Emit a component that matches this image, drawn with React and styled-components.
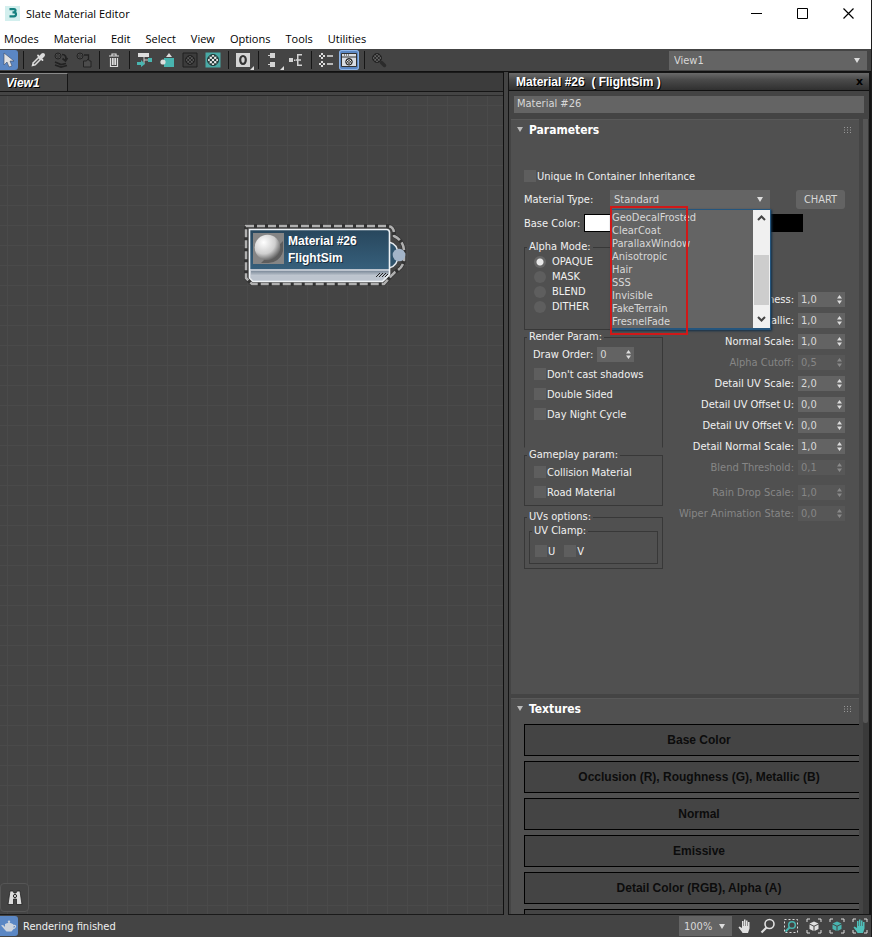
import React, { useId } from 'react'
import styled, { createGlobalStyle, css } from 'styled-components'

const GlobalStyle = createGlobalStyle`
  * {
    box-sizing: border-box;
  }

  body {
    margin: 0;
    background: #444;
  }

  button,
  input,
  select {
    font: inherit;
    color: inherit;
    margin: 0;
    padding: 0;
    border: 0;
    border-radius: 0;
    outline: 0;
  }
`

const uiFont = css`
  font-family: 'DejaVu Sans Condensed', 'DejaVu Sans', sans-serif;
  font-size: 11px;
`

const Window = styled.div`
  ${uiFont}
  display: flex;
  flex-direction: column;
  height: 100vh;
  overflow: hidden;
  color: #f0f0f0;
  background: #444;
  border-right: 1px solid #1c1c1c;
`

const TitleBar = styled.header`
  display: flex;
  align-items: center;
  height: 27px;
  padding-left: 5px;
  color: #000;
  background: #fff;
  font-family: 'Open Sans', sans-serif;

  h1 {
    flex: 1;
    margin: 0 0 0 6px;
    font-size: 11px;
    font-weight: 400;
  }
`

const WindowButton = styled.button`
  display: flex;
  align-items: center;
  justify-content: center;
  width: 46px;
  height: 27px;
  background: none;
`

const MenuBar = styled.nav`
  display: flex;
  gap: 15px;
  height: 22px;
  padding: 0 4px;
  background: #fff;
  color: #000;
  font-family: 'Open Sans', sans-serif;

  button {
    background: none;
    line-height: 24px;
  }
`

const Toolbar = styled.div`
  display: flex;
  align-items: center;
  gap: 3px;
  height: 23px;
  padding-right: 4px;
  border-bottom: 1px solid #111;
`

const Tool = styled.button`
  position: relative;
  display: flex;
  align-items: center;
  justify-content: center;
  flex: none;
  width: ${(p) => (p.$edge ? 18 : 20)}px;
  height: 20px;
  background: ${(p) => (p.$active ? '#5b87c4' : 'none')};
  border-radius: ${(p) => (p.$edge ? '0 3px 3px 0' : '3px')};
  ${(p) => p.$ring && 'box-shadow: inset 0 0 0 1px #8db4e8;'}
`

const Separator = styled.span`
  align-self: stretch;
  width: 4px;
  margin: 2px 0;
  background: linear-gradient(#161616, #161616) center / 1px 100% no-repeat;
`

const Spacer = styled.span`
  flex: 1;
`

const SelectBox = styled.div`
  position: relative;
  flex: none;
  width: ${(p) => p.$width}px;
  height: ${(p) => p.$height}px;
  background: #646464;
  color: #d8d8d8;

  select {
    width: 100%;
    height: 100%;
    padding-left: ${(p) => p.$indent}px;
    background: none;
    appearance: none;
  }

  &::after {
    content: '';
    position: absolute;
    top: 50%;
    right: 7px;
    margin-top: -2px;
    border: 3px solid transparent;
    border-top: 5px solid #ddd;
    border-bottom: 0;
    pointer-events: none;
  }
`

const Workspace = styled.main`
  flex: 1;
  display: flex;
  gap: 4px;
  min-height: 0;
`

const GraphPane = styled.section`
  flex: 1;
  display: flex;
  flex-direction: column;
  min-width: 0;
  border-right: 1px solid #111;
`

const TabStrip = styled.div`
  height: 20px;
  margin-bottom: 3px;
  background: #3c3c3c;
  border-top: 1px solid #1a1a1a;
  border-bottom: 1px solid #151515;
`

const Tab = styled.button`
  width: 68px;
  height: 18px;
  padding-left: 6px;
  text-align: left;
  color: #fff;
  background: #444;
  border-top: 1px solid #8a8a8a;
  border-right: 1px solid #151515;
  font: italic bold 12px/16px 'Liberation Sans', sans-serif;
  text-shadow: 1px 1px 0 #000;
`

const Canvas = styled.div`
  position: relative;
  flex: 1;
  border-top: 1px solid #2a2a2a;
  border-bottom: 1px solid #1a1a1a;
  background-color: #444;
  background-image: linear-gradient(90deg, #4a4a4a 1px, transparent 1px),
    linear-gradient(#4a4a4a 1px, transparent 1px);
  background-size: 20px 20px;
  background-position: 7px 9px;
`

const NodeBox = styled.div`
  position: absolute;
  left: 240px;
  top: 124px;
  width: 170px;
  height: 66px;

  > svg {
    position: absolute;
    inset: 0;
  }
`

const NodeContent = styled.div`
  position: relative;
  display: flex;
  gap: 4px;
  padding: 13px 0 0 13px;
  font: bold 12px/17px 'Liberation Sans', sans-serif;
  color: #fff;
  text-shadow: 1px 1px 0 #1a2c3a;

  p {
    margin: 0;
  }
`

const FindButton = styled.button`
  position: absolute;
  left: 0;
  bottom: 2px;
  display: flex;
  align-items: center;
  justify-content: center;
  width: 29px;
  height: 29px;
  background: #444;
  border: 1px solid #555;
  border-radius: 4px;
`

const EditorPane = styled.aside`
  display: flex;
  flex-direction: column;
  flex: none;
  width: 363px;
  border: solid #151515;
  border-width: 1px 2px 1px 1px;
  overflow: hidden;
`

const PaneTitle = styled.div`
  display: flex;
  align-items: center;
  justify-content: space-between;
  flex: none;
  height: 18px;
  padding: 0 6px 0 7px;
  background: linear-gradient(#6a6a6a, #4a4a4a 40%, #303030);
  border-bottom: 1px solid #111;

  h2 {
    margin: 0;
    white-space: pre;
    font: bold 12px/16px 'Liberation Sans', sans-serif;
    text-shadow: 1px 1px 0 #000;
    color: #fff;
  }

  button {
    background: none;
    color: #000;
    font: bold 11px/14px 'DejaVu Sans', sans-serif;
  }
`

const NameInput = styled.input`
  flex: none;
  height: 17px;
  margin: 5px 5px 6px;
  padding: 0 3px 2px;
  color: #d8d8d8;
  background: #646464;
`

const PaneBody = styled.div`
  flex: 1;
  display: flex;
  gap: 4px;
  min-height: 0;
  padding-left: 2px;
`

const Rollouts = styled.div`
  flex: 1;
  display: flex;
  flex-direction: column;
  gap: 4px;
  min-width: 0;
  overflow: hidden;
`

const Scrollbar = styled.div`
  width: 6px;
  background: #3a3a3a;

  &::before {
    content: '';
    display: block;
    width: 5px;
    height: 76%;
    background: #565656;
    border-radius: 0 0 2px 2px;
  }
`

const Rollout = styled.section`
  flex: none;
  background: #505050;
  border-top: 1px solid #595959;
`

const RolloutTitle = styled.div`
  display: flex;
  align-items: center;
  gap: 6px;
  height: 20px;
  padding: 0 7px 1px 6px;

  h3 {
    flex: 1;
    margin: 0;
    color: #fff;
    font: bold 12px/20px 'DejaVu Sans Condensed', 'DejaVu Sans', sans-serif;
  }
`

const ParamsBody = styled.div`
  display: flex;
  flex-direction: column;
  gap: 4px;
  min-height: 554px;
  padding: 27px 14px 0 13px;
`

const Row = styled.div`
  display: flex;
  align-items: center;
  gap: ${(p) => p.$gap || 0}px;
  height: ${(p) => p.$height || 20}px;
  padding-left: ${(p) => p.$indent || 0}px;
`

const FieldLabel = styled.label`
  width: ${(p) => (p.$width ? `${p.$width}px` : 'auto')};
  white-space: nowrap;
`

const CheckLabel = styled.label`
  display: flex;
  align-items: center;
  gap: ${(p) => p.$gap || 1}px;
  white-space: nowrap;

  input {
    flex: none;
    width: 12px;
    height: 12px;
    appearance: none;
    background: #5e5e5e;
  }

  input[type='radio'] {
    border-radius: 50%;
  }

  input[type='radio']:checked {
    background: radial-gradient(circle, #e8e8e8 0 3px, #666 4px);
  }
`

const ChartButton = styled.button`
  width: 49px;
  height: 19px;
  margin-left: auto;
  color: #d8d8d8;
  background: #636363;
  border-radius: 3px;
`

const Swatch = styled.button`
  width: ${(p) => p.$width}px;
  height: 18px;
  background: ${(p) => p.$color};
  border: 1px solid #000;
`

const DropList = styled.div`
  position: absolute;
  z-index: 2;
  top: 19px;
  left: 0;
  display: flex;
  width: 161px;
  height: 121px;
  background: #646464;
  border: solid #24557d;
  border-width: 1px 1px 2px 0;
  box-shadow: 1px 1px 2px #12304a;

  ul {
    flex: 1;
    margin: 0;
    padding: 1px 0 0 2px;
    list-style: none;
    line-height: 13px;
    white-space: nowrap;
  }
`

const ListScroll = styled.div`
  display: flex;
  flex-direction: column;
  align-items: center;
  width: 17px;
  background: #f0f0f0;

  button {
    display: flex;
    align-items: center;
    justify-content: center;
    width: 17px;
    height: 17px;
    background: none;
  }

  span {
    width: 15px;
    height: 50px;
    margin: 28px 0 6px;
    background: #cdcdcd;
  }
`

const RedMark = styled.div`
  position: absolute;
  z-index: 3;
  top: 16px;
  left: 0;
  width: 78px;
  height: 129px;
  border: 2px solid #d01818;
  pointer-events: none;
`

const Columns = styled.div`
  display: flex;
  align-items: flex-start;
  justify-content: space-between;
  padding-top: 3px;
`

const Groups = styled.div`
  width: 139px;
`

const Group = styled.fieldset`
  min-width: 0;
  min-height: ${(p) => p.$height || 0}px;
  margin: 0 ${(p) => p.$inset || 0}px ${(p) => p.$space || 0}px;
  padding: ${(p) => p.$top || 0}px 0 ${(p) => p.$pad || 0}px;
  border: 1px solid #383838;
  ${(p) => p.$open && 'border-bottom-color: transparent;'}

  legend {
    margin-left: 2px;
    padding: 0 2px;
    line-height: 14px;
  }
`

const Values = styled.div`
  padding-top: 49px;
`

const ValueRow = styled.div`
  display: flex;
  align-items: center;
  justify-content: flex-end;
  gap: 4px;
  height: 21px;
  margin-top: ${(p) => (p.$apart ? 4 : 0)}px;
  color: ${(p) => (p.$disabled ? '#868686' : '#f0f0f0')};
  white-space: nowrap;
`

const SpinnerBox = styled.span`
  display: flex;
  align-items: center;
  width: ${(p) => p.$width}px;
  height: 15px;
  padding-right: 3px;
  background: ${(p) => (p.$disabled ? '#575757' : '#636363')};
  color: ${(p) => (p.$disabled ? '#868686' : '#d8d8d8')};

  input {
    flex: 1;
    min-width: 0;
    padding-left: 3px;
    background: none;
  }
`

const TextureList = styled.div`
  display: flex;
  flex-direction: column;
  gap: 5px;
  padding: 5px 0 0 13px;
`

const TextureButton = styled.button`
  width: calc(100% + 15px);
  height: 32px;
  color: #0c0c0c;
  background: #444;
  border: 1px solid #000;
  font: bold 12px 'Liberation Sans', sans-serif;
`

const StatusBar = styled.footer`
  display: flex;
  align-items: center;
  flex: none;
  gap: 3px;
  height: 22px;
  padding-right: 1px;
`

const StatusText = styled.span`
  flex: 1;
  padding-left: 2px;
`

const Svg = ({ size = 16, children }) => (
  <svg width={size} height={size} viewBox={`0 0 ${size} ${size}`} fill="none" aria-hidden="true">
    {children}
  </svg>
)

// round checkered material swatch, two contrasting tones
const Checker = ({ x, y, r = 5, light = '#ddd', dark = '#333' }) => {
  const clip = useId()
  const u = (r * 2) / 5
  return (
    <g>
      <clipPath id={clip}>
        <circle cx={x} cy={y} r={r} />
      </clipPath>
      <g clipPath={`url(#${clip})`}>
        <circle cx={x} cy={y} r={r} fill={dark} />
        {[0, 1, 2, 3, 4].map((row) =>
          [0, 1, 2, 3, 4].map((col) =>
            (row + col) % 2 === 0 ? (
              <rect
                key={`${row}${col}`}
                x={x - r + col * u}
                y={y - r + row * u}
                width={u}
                height={u}
                fill={light}
              />
            ) : null
          )
        )}
      </g>
      <circle cx={x} cy={y} r={r} stroke={dark} />
    </g>
  )
}

const MiniChecker = ({ y }) => (
  <path
    d={`M3 ${y}h2v2h-2zM1 ${y + 2}h2v2h-2zM5 ${y + 2}h2v2h-2zM3 ${y + 4}h2v2h-2z`}
    fill="#ddd"
  />
)

const icons = {
  pointer: <path d="M3 1v12l3-3 2 5 3-1-2-5h4z" fill="#e2e2e2" stroke="#3c4c66" strokeWidth=".6" />,
  picker: (
    <>
      <path d="M1.500 14.500l1-4L8.500 4.500l3 3-6 6z" fill="#ddd" />
      <path d="M4 12l5-5" stroke="#555" strokeWidth="1.2" />
      <path d="M8 3.500L12.500 8" stroke="#ddd" strokeWidth="1.800" strokeLinecap="round" />
      <path d="M11.500 4.500l1.500-1.500" stroke="#ddd" strokeWidth="4" strokeLinecap="round" />
    </>
  ),
  put: (
    <>
      <Checker x={5} y={4} r={3} light="#666" dark="#222" />
      <path
        d="M2 10l6 2.500 5-1M2 13l6 2 6-1.500M9 2.500c4 0 4.500 3 3.500 6M9.500 6.500l3 2.500 2-3"
        stroke="#222"
        strokeWidth="1.700"
      />
    </>
  ),
  assign: (
    <>
      <Checker x={4} y={4} r={3} light="#666" dark="#222" />
      <path d="M8 3h4.500v5" stroke="#222" strokeWidth="1.300" />
      <path d="M7.500 9h3l1.500-2 1.500 2h1.500v6H7.500z" fill="#4c4c4c" stroke="#222" />
    </>
  ),
  trash: (
    <path
      d="M3 4h10M6 4V2h4v2M4.500 6v8.500h7V6M6.500 6v7M8 6v7M9.500 6v7"
      stroke="#ddd"
      strokeWidth="1.200"
    />
  ),
  move: (
    <>
      <path d="M2 1h11v4H2z" fill="#ddd" />
      <path d="M8 5v3h4M8 8v4" stroke="#ccc" />
      <path d="M12 6h4v4h-4zM1 10h4V8l4 4-4 3v-2H1z" fill="#49b5b0" />
    </>
  ),
  hide: (
    <>
      <path d="M5 6h10v9H5z" fill="#49b5b0" />
      <path d="M7 5l3-4 3 4z" fill="#ddd" />
      <circle cx="4" cy="10" r="2.600" fill="#ddd" />
    </>
  ),
  background: (
    <>
      <path d="M1 1h14v14H1z" stroke="#1e1e1e" fill="#3c3c3c" />
      <Checker x={8} y={8} r={4.5} light="#5c5c5c" dark="#222" />
    </>
  ),
  shaded: (
    <>
      <path d="M.5.5h15v15H.5z" fill="#49aaa6" />
      <Checker x={8} y={8} r={5.5} light="#eee" dark="#1f3534" />
    </>
  ),
  channel: (
    <>
      <path d="M1 1h14v14H1z" fill="#d4d4d4" />
      <ellipse cx="8" cy="8" rx="2.800" ry="4" stroke="#333" strokeWidth="2.200" />
    </>
  ),
  layoutAll: <path d="M5 1h5v5H5zM5 10h5v5H5zM3 3h2v1H3zM3 12h2v1H3z" fill="#d4d4d4" />,
  layoutKids: (
    <path
      d="M1 6h4v4H1zM6 7.500h1.500v1.500H6zM9 2h5v1.500h-3.500v3.800H13v1.500h-2.500v3.800H14V14H9V8.800H8V7.300h1z"
      fill="#d4d4d4"
    />
  ),
  navigator: (
    <>
      <MiniChecker y={1} />
      <MiniChecker y={9} />
      <path d="M9 4h6M9 12h6" stroke="#ddd" strokeWidth="1.600" />
    </>
  ),
  paramEditor: (
    <>
      <path d="M.5 1.500h15v13H.5z" fill="#d9dde4" stroke="#333" />
      <path d="M1 5h14M3 3h1M5 3h1M7 3h1" stroke="#333" />
      <Checker x={8} y={9.800} r={3.300} light="#eee" dark="#222" />
    </>
  ),
  search: (
    <>
      <Checker x={6} y={6} r={4.5} light="#666" dark="#222" />
      <path d="M10.500 10.500l3 3" stroke="#2b2b2b" strokeWidth="3.500" strokeLinecap="round" />
    </>
  ),
  find: (
    <>
      <path
        d="M3 1h3l1 2h2l1-2h3l2 13.500H9.500V9h-3v5.500H1z"
        fill="#ddd"
        stroke="#222"
        strokeWidth=".8"
      />
      <circle cx="8" cy="6" r="1.600" fill="#ddd" stroke="#222" />
    </>
  ),
  teapot: (
    <>
      <path d="M4 6c2-1.500 6-1.500 8 0 1.500 3 .5 6-1.500 7.500h-5C4 12.500 2 9 0 7.500L2 7l2 2z" fill="#cdd3dc" />
      <path d="M12 7.500c4-1 3 3-.5 3.500" stroke="#cdd3dc" strokeWidth="1.200" />
      <circle cx="8" cy="3.800" r="1.200" fill="#cdd3dc" />
    </>
  ),
}

const handPath =
  'M5 14L1.500 9.500l1-1L5 10V3h1.500v5H7V1.500h1.500V8H9V2.500h1.500V8h.5V4h1.500v6.500L11 15H5.500z'
const corners = 'M1 4V1h3M12 1h3v3M15 12v3h-3M4 15H1v-3'

const Cube = ({ fill }) => (
  <>
    <path
      d="M8 3.500l4.500 2L8 7.700 3.500 5.500zM3.500 6.600l4 2v4.400l-4-2zM12.500 6.600l-4 2v4.400l4-2z"
      fill={fill}
    />
    <path d={corners} stroke="#ddd" />
  </>
)

const statusTools = [
  ['Pan', <path d={handPath} fill="#e0e0e0" />],
  [
    'Zoom',
    <>
      <circle cx="9.500" cy="6" r="4.500" stroke="#e0e0e0" strokeWidth="1.600" />
      <path d="M6.500 9.500l-5 5" stroke="#e0e0e0" strokeWidth="2.200" />
    </>,
  ],
  [
    'Zoom Region',
    <>
      <path d="M1.500 1.500h13v13h-13z" stroke="#ddd" strokeDasharray="2 2" />
      <circle cx="9" cy="7" r="3.300" stroke="#49b5b0" strokeWidth="1.500" />
      <path d="M6.500 9.500l-4 4" stroke="#49b5b0" strokeWidth="2" />
    </>,
  ],
  ['Zoom Extents', <Cube fill="#e0e0e0" />],
  ['Zoom Extents Selected', <Cube fill="#49b5b0" />],
  [
    'Pan to Selected',
    <>
      <path d={corners} stroke="#ddd" />
      <path d={handPath} fill="#4fc0ba" />
    </>,
  ],
]

// null is a separator
const toolbar = [
  { icon: 'pointer', label: 'Select Tool', active: true, edge: true },
  null,
  { icon: 'picker', label: 'Pick Material from Object' },
  { icon: 'put', label: 'Put Material to Scene' },
  { icon: 'assign', label: 'Assign Material to Selection' },
  null,
  { icon: 'trash', label: 'Delete Selected' },
  null,
  { icon: 'move', label: 'Move Children' },
  { icon: 'hide', label: 'Hide Unused Nodeslots' },
  { icon: 'background', label: 'Show Background in Preview' },
  { icon: 'shaded', label: 'Show Shaded Material in Viewport' },
  null,
  { icon: 'channel', label: 'Material ID Channel', flyout: true },
  null,
  { icon: 'layoutAll', label: 'Lay Out All', flyout: true },
  { icon: 'layoutKids', label: 'Lay Out Children' },
  null,
  { icon: 'navigator', label: 'Material/Map Browser' },
  { icon: 'paramEditor', label: 'Parameter Editor', active: true, ring: true },
  null,
  { icon: 'search', label: 'Select by Material' },
]

const menus = ['Modes', 'Material', 'Edit', 'Select', 'View', 'Options', 'Tools', 'Utilities']

const materialTypes = [
  'GeoDecalFrosted',
  'ClearCoat',
  'ParallaxWindow',
  'Anisotropic',
  'Hair',
  'SSS',
  'Invisible',
  'FakeTerrain',
  'FresnelFade',
]

const values = [
  { label: 'Roughness:', value: '1,0' },
  { label: 'Metallic:', value: '1,0' },
  { label: 'Normal Scale:', value: '1,0' },
  { label: 'Alpha Cutoff:', value: '0,5', disabled: true },
  { label: 'Detail UV Scale:', value: '2,0' },
  { label: 'Detail UV Offset U:', value: '0,0' },
  { label: 'Detail UV Offset V:', value: '0,0' },
  { label: 'Detail Normal Scale:', value: '1,0' },
  { label: 'Blend Threshold:', value: '0,1', disabled: true },
  { label: 'Rain Drop Scale:', value: '1,0', disabled: true, apart: true },
  { label: 'Wiper Animation State:', value: '0,0', disabled: true },
]

const textures = [
  'Base Color',
  'Occlusion (R), Roughness (G), Metallic (B)',
  'Normal',
  'Emissive',
  'Detail Color (RGB), Alpha (A)',
  '',
]

const Flyout = styled.span`
  position: absolute;
  right: -1px;
  bottom: 0;
  border: 2px solid transparent;
  border-right-color: #ddd;
  border-bottom-color: #ddd;
`

const Check = ({ children }) => (
  <CheckLabel>
    <input type="checkbox" />
    {children}
  </CheckLabel>
)

const Spinner = ({ id, value, disabled, width = 47 }) => (
  <SpinnerBox $width={width} $disabled={disabled}>
    <input id={id} type="text" defaultValue={value} disabled={disabled} />
    <svg width="5" height="9" viewBox="0 0 5 9" fill={disabled ? '#8a8a8a' : '#ddd'}>
      <path d="M0 3.500L2.500 0 5 3.500zM0 5.500L2.500 9 5 5.500z" />
    </svg>
  </SpinnerBox>
)

const RolloutHead = ({ title }) => (
  <RolloutTitle>
    <svg width="6" height="5" viewBox="0 0 6 5">
      <path d="M0 0h6L3 5z" fill="#bbb" />
    </svg>
    <h3>{title}</h3>
    <svg width="8" height="6" viewBox="0 0 8 6">
      <path d="M0 .5h7M0 3h7M0 5.500h7" stroke="#999" strokeDasharray="1 2" />
    </svg>
  </RolloutTitle>
)

const nodeOutline =
  'M6 6H147Q153 6 154 12V16Q163 20 164 30V40Q163 48 155 52L152 55 144 64H12L6 58Z'

const MaterialNode = () => (
  <NodeBox>
    <svg width="170" height="66" viewBox="0 0 170 66" fill="none">
      <defs>
        <linearGradient id="nodeBlue" x1="0" y1="0" x2="0" y2="1">
          <stop offset="0" stopColor="#28475d" />
          <stop offset="1" stopColor="#365f7b" />
        </linearGradient>
        <linearGradient id="nodeFoot" x1="0" y1="0" x2="0" y2="1">
          <stop offset="0" stopColor="#7e8c9b" />
          <stop offset="1" stopColor="#c5ccd5" />
        </linearGradient>
      </defs>
      <path d={nodeOutline} stroke="#333" strokeWidth="4" />
      <path d={nodeOutline} stroke="#b0b0b0" strokeWidth="2.500" strokeDasharray="8 3" />
      <path d="M149 22q9 2 9 13t-9 13" fill="#2f536c" stroke="#e4e9ee" strokeWidth="1.500" />
      <path d="M10 10h140v39H10z" fill="url(#nodeBlue)" />
      <path d="M10 49h140v6l-6 6H13l-3-3z" fill="#bcc4ce" />
      <path d="M11 51h138v5H11z" fill="url(#nodeFoot)" />
      <path
        d="M9.500 9.500h137q3 0 3 3v42l-7 7H13l-3.500-3.500z"
        stroke="#eef2f5"
        strokeWidth="1.600"
      />
      <path d="M136 57l4-4M139 57l4-4M142 57l4-4M145 57l3-3" stroke="#222" />
      <circle cx="159" cy="35" r="6.300" fill="#a3b4c8" />
    </svg>
    <NodeContent>
      <svg width="31" height="31" viewBox="0 0 31 31">
        <defs>
          <radialGradient id="ball" cx=".35" cy=".3" r=".75">
            <stop offset="0" stopColor="#fff" />
            <stop offset=".6" stopColor="#cfcfcf" />
            <stop offset="1" stopColor="#5a5a5a" />
          </radialGradient>
        </defs>
        <path d="M0 0h31v31H0z" fill="#858585" />
        <path d="M14 30a15 15 0 0016-12V8L8 30z" fill="#5d5d5d" />
        <circle cx="14.500" cy="14.500" r="12.800" fill="url(#ball)" />
      </svg>
      <div>
        <p>Material #26</p>
        <p>FlightSim</p>
      </div>
    </NodeContent>
  </NodeBox>
)

const Parameters = () => (
  <Rollout>
    <RolloutHead title="Parameters" />
    <ParamsBody>
      <Row $height={18}>
        <Check>Unique In Container Inheritance</Check>
      </Row>
      <Row>
        <FieldLabel htmlFor="type" $width={86}>
          Material Type:
        </FieldLabel>
        <SelectBox $width={160} $height={19} $indent={4}>
          <select id="type" defaultValue="Standard">
            <option>Standard</option>
          </select>
          <DropList>
            <ul role="listbox" aria-label="Material types">
              {materialTypes.map((type) => (
                <li key={type} role="option" aria-selected="false">
                  {type}
                </li>
              ))}
            </ul>
            <ListScroll>
              <button aria-label="Scroll up">
                <svg width="9" height="6" viewBox="0 0 9 6" fill="none">
                  <path d="M1 5l3.500-3.500L8 5" stroke="#444" strokeWidth="2" />
                </svg>
              </button>
              <span />
              <button aria-label="Scroll down">
                <svg width="9" height="6" viewBox="0 0 9 6" fill="none">
                  <path d="M1 1l3.500 3.500L8 1" stroke="#444" strokeWidth="2" />
                </svg>
              </button>
            </ListScroll>
          </DropList>
          <RedMark />
        </SelectBox>
        <ChartButton>CHART</ChartButton>
      </Row>
      <Row $gap={4}>
        <FieldLabel as="span">Base Color:</FieldLabel>
        <Swatch $width={60} $color="#fff" aria-label="Base color" />
        <Spacer />
        <Swatch $width={60} $color="#000" aria-label="Emissive color" />
        <FieldLabel as="span" $width={38} />
      </Row>
      <Columns>
        <Groups>
          <Group $height={90}>
            <legend>Alpha Mode:</legend>
            {['OPAQUE', 'MASK', 'BLEND', 'DITHER'].map((mode) => (
              <Row key={mode} $height={15} $indent={9}>
                <CheckLabel $gap={6}>
                  <input type="radio" name="alpha" defaultChecked={mode === 'OPAQUE'} />
                  {mode}
                </CheckLabel>
              </Row>
            ))}
          </Group>
          <Group $height={118} $open>
            <legend>Render Param:</legend>
            <Row $indent={8} $gap={4}>
              <FieldLabel htmlFor="order">Draw Order:</FieldLabel>
              <Spinner id="order" value="0" width={37} />
            </Row>
            <Row $indent={9}>
              <Check>Don't cast shadows</Check>
            </Row>
            <Row $indent={9}>
              <Check>Double Sided</Check>
            </Row>
            <Row $indent={9}>
              <Check>Day Night Cycle</Check>
            </Row>
          </Group>
          <Group $height={58} $space={4}>
            <legend>Gameplay param:</legend>
            <Row $indent={9}>
              <Check>Collision Material</Check>
            </Row>
            <Row $indent={9}>
              <Check>Road Material</Check>
            </Row>
          </Group>
          <Group $pad={4}>
            <legend>UVs options:</legend>
            <Group $inset={4} $top={3} $pad={2}>
              <legend>UV Clamp:</legend>
              <Row $indent={5} $gap={9}>
                <Check>U</Check>
                <Check>V</Check>
              </Row>
            </Group>
          </Group>
        </Groups>
        <Values>
          {values.map(({ label, value, disabled, apart }) => (
            <ValueRow key={label} $disabled={disabled} $apart={apart}>
              <label htmlFor={label}>{label}</label>
              <Spinner id={label} value={value} disabled={disabled} />
            </ValueRow>
          ))}
        </Values>
      </Columns>
    </ParamsBody>
  </Rollout>
)

const Textures = () => (
  <Rollout>
    <RolloutHead title="Textures" />
    <TextureList>
      {textures.map((name) => (
        <TextureButton key={name}>{name}</TextureButton>
      ))}
    </TextureList>
  </Rollout>
)

const App = () => (
  <>
    <GlobalStyle />
    <Window>
      <TitleBar>
        <Svg size={15}>
          <path d="M0 0h15v15H0z" fill="#d3efee" />
          <path
            d="M4.500 3.200h4.500q1.500 0 1.500 1.500T9 6.300H7.500M9 6.300q2 0 2 2t-2 2H4.500"
            stroke="#15807f"
            strokeWidth="2.200"
          />
        </Svg>
        <h1>Slate Material Editor</h1>
        <WindowButton aria-label="Minimize">
          <Svg size={11}>
            <path d="M0 5.500h11" stroke="#000" />
          </Svg>
        </WindowButton>
        <WindowButton aria-label="Maximize">
          <Svg size={11}>
            <path d="M.5.5h10v10H.5z" stroke="#000" />
          </Svg>
        </WindowButton>
        <WindowButton aria-label="Close">
          <Svg size={11}>
            <path d="M.5.5l10 10M10.500.5l-10 10" stroke="#000" strokeWidth="1.200" />
          </Svg>
        </WindowButton>
      </TitleBar>
      <MenuBar>
        {menus.map((menu) => (
          <button key={menu}>{menu}</button>
        ))}
      </MenuBar>
      <Toolbar>
        {toolbar.map((tool, index) =>
          tool ? (
            <Tool
              key={tool.icon}
              aria-label={tool.label}
              $active={tool.active}
              $edge={tool.edge}
              $ring={tool.ring}
            >
              <Svg>{icons[tool.icon]}</Svg>
              {tool.flyout && <Flyout />}
            </Tool>
          ) : (
            <Separator key={index} />
          )
        )}
        <Spacer />
        <SelectBox $width={198} $height={19} $indent={5}>
          <select aria-label="View">
            <option>View1</option>
          </select>
        </SelectBox>
      </Toolbar>
      <Workspace>
        <GraphPane>
          <TabStrip>
            <Tab>View1</Tab>
          </TabStrip>
          <Canvas>
            <MaterialNode />
            <FindButton aria-label="Find">
              <Svg>{icons.find}</Svg>
            </FindButton>
          </Canvas>
        </GraphPane>
        <EditorPane>
          <PaneTitle>
            <h2>{'Material #26  ( FlightSim )'}</h2>
            <button aria-label="Close panel">x</button>
          </PaneTitle>
          <NameInput aria-label="Material name" defaultValue="Material #26" />
          <PaneBody>
            <Rollouts>
              <Parameters />
              <Textures />
            </Rollouts>
            <Scrollbar />
          </PaneBody>
        </EditorPane>
      </Workspace>
      <StatusBar>
        <Tool $active $edge aria-label="Render preview">
          <Svg>{icons.teapot}</Svg>
        </Tool>
        <StatusText>Rendering finished</StatusText>
        <SelectBox $width={53} $height={20} $indent={5}>
          <select aria-label="Zoom level">
            <option>100%</option>
          </select>
        </SelectBox>
        {statusTools.map(([label, icon]) => (
          <Tool key={label} aria-label={label}>
            <Svg>{icon}</Svg>
          </Tool>
        ))}
      </StatusBar>
    </Window>
  </>
)

export default App
